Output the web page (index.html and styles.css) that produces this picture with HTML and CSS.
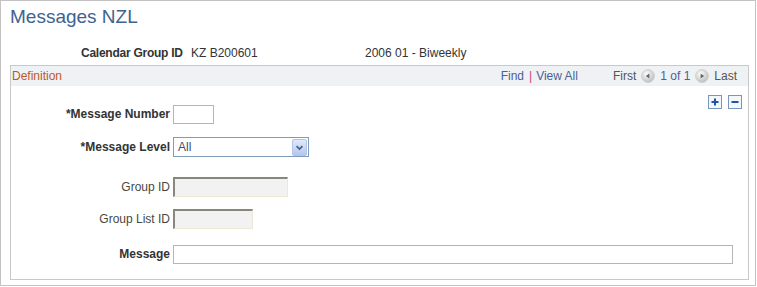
FILE: index.html
```html
<!DOCTYPE html>
<html lang="en">
<head>
    <meta charset="UTF-8">
    <title>Messages NZL</title>
    <link rel="stylesheet" href="styles.css">
</head>
<body>

    <div class="page">
        <h1 class="title">Messages NZL</h1>

        <div class="calendar-row">
            <span class="cal-label">Calendar Group ID</span>
            <span class="cal-id">KZ B200601</span>
            <span class="cal-desc">2006 01 - Biweekly</span>
        </div>

        <div class="grid-box">
            <div class="grid-header">
                <span class="grid-title">Definition</span>
                <div class="grid-nav">
                    <span class="nav-link">Find</span>
                    <span class="nav-sep">|</span>
                    <span class="nav-link">View All</span>
                    <span class="nav-text nav-first">First</span>
                    <svg class="nav-arrow" width="14" height="14" viewBox="0 0 14 14">
                        <defs>
                            <radialGradient id="circleGrad" cx="40%" cy="35%" r="70%">
                                <stop offset="0" stop-color="#ffffff"/>
                                <stop offset="1" stop-color="#b9b9b9"/>
                            </radialGradient>
                        </defs>
                        <circle cx="7" cy="7" r="6.4" fill="url(#circleGrad)" stroke="#cfcfcf"/>
                        <path d="M4.8 7 L8.4 4.6 L8.4 9.4 Z" fill="#666"/>
                    </svg>
                    <span class="nav-link">1 of 1</span>
                    <svg class="nav-arrow" width="14" height="14" viewBox="0 0 14 14">
                        <circle cx="7" cy="7" r="6.4" fill="url(#circleGrad)" stroke="#cfcfcf"/>
                        <path d="M9.2 7 L5.6 4.6 L5.6 9.4 Z" fill="#666"/>
                    </svg>
                    <span class="nav-text">Last</span>
                </div>
            </div>

            <div class="grid-body">
                <div class="row-tools">
                    <svg width="14" height="14" viewBox="0 0 14 14">
                        <rect x=".5" y=".5" width="13" height="13" fill="#f3f6fb" stroke="#7b96bd"/>
                        <path d="M7 3.5v7M3.5 7h7" stroke="#1e55a2" stroke-width="2"/>
                    </svg>
                    <svg width="14" height="14" viewBox="0 0 14 14">
                        <rect x=".5" y=".5" width="13" height="13" fill="#f3f6fb" stroke="#7b96bd"/>
                        <path d="M3.5 7h7" stroke="#1e55a2" stroke-width="2"/>
                    </svg>
                </div>

                <div class="field-row row-number">
                    <label class="field-label" for="msgNumber">*Message Number</label>
                    <input type="text" id="msgNumber" class="input input-number">
                </div>

                <div class="field-row row-level">
                    <label class="field-label">*Message Level</label>
                    <div class="select">
                        <span class="select-text">All</span>
                        <svg class="select-btn" width="15" height="17" viewBox="0 0 15 17">
                            <defs>
                                <linearGradient id="btnGrad" x1="0" y1="0" x2="0" y2="1">
                                    <stop offset="0" stop-color="#e2eafb"/>
                                    <stop offset="1" stop-color="#b4c6ef"/>
                                </linearGradient>
                            </defs>
                            <rect x=".5" y=".5" width="14" height="16" rx="1.5" fill="url(#btnGrad)" stroke="#b2c4ea"/>
                            <path d="M4.6 7.2l2.9 2.9 2.9-2.9" fill="none" stroke="#4b5f86" stroke-width="1.7"/>
                        </svg>
                    </div>
                </div>

                <div class="field-row row-group">
                    <label class="field-label label-plain" for="groupId">Group ID</label>
                    <input type="text" id="groupId" class="input input-off input-group" readonly>
                </div>

                <div class="field-row row-list">
                    <label class="field-label label-plain" for="groupListId">Group List ID</label>
                    <input type="text" id="groupListId" class="input input-off input-list" readonly>
                </div>

                <div class="field-row row-message">
                    <label class="field-label" for="message">Message</label>
                    <input type="text" id="message" class="input input-message">
                </div>
            </div>
        </div>
    </div>

</body>
</html>
```

FILE: styles.css
```css
body {
    margin: 0;
    font-family: "Liberation Sans", Arial, sans-serif;
    font-size: 12px;
    color: #333;
    background-color: white;
}

.page {
    width: 754px;
    height: 284px;
    border: 1px solid #c3c3c3;
}

.title {
    margin: 0;
    padding: 5px 0 0 9px;
    font-size: 19px;
    line-height: 22px;
    font-weight: normal;
    color: #41628f;
}

.calendar-row {
    display: flex;
    margin-top: 18px;
    padding-left: 80px;
    height: 14px;
    line-height: 14px;
}

.cal-label {
    width: 110px;
    font-weight: bold;
    letter-spacing: -0.25px;
}

.cal-id {
    width: 174px;
}

.grid-box {
    margin: 5px 0 0 9px;
    width: 737px;
    border: 1px solid #c9c9c9;
}

.grid-header {
    display: flex;
    align-items: center;
    height: 20px;
    line-height: 20px;
    padding: 0 11px 0 1px;
    background-color: #eef2f4;
}

.grid-title {
    color: #bb5a1c;
}

.grid-nav {
    display: flex;
    align-items: center;
    margin-left: auto;
}

.nav-link {
    color: #4f5f98;
}

.nav-sep {
    color: #d0407a;
    margin: 0 4px 0 5px;
}

.nav-text {
    color: #555;
}

.nav-first {
    margin-left: 35px;
}

.nav-arrow {
    margin: -1px 5px 0 5px;
}

.grid-body {
    padding: 9px 6px 15px 0;
}

.row-tools {
    display: flex;
    justify-content: flex-end;
    gap: 6px;
    height: 14px;
    margin-bottom: -4px;
}

.field-row {
    display: flex;
    align-items: center;
}

.field-label {
    width: 159px;
    margin-right: 3px;
    text-align: right;
    font-weight: bold;
    color: #333;
}

.label-plain {
    font-weight: normal;
    color: #48483f;
}

.row-number {
    height: 19px;
    line-height: 19px;
}

.row-level {
    height: 20px;
    line-height: 20px;
    margin-top: 13px;
}

.row-group {
    height: 20px;
    line-height: 20px;
    margin-top: 20px;
}

.row-list {
    height: 20px;
    line-height: 20px;
    margin-top: 12px;
}

.row-message {
    height: 19px;
    line-height: 19px;
    margin-top: 16px;
}

.input {
    box-sizing: border-box;
    margin: 0;
    padding: 0 3px;
    font-family: "Liberation Sans", Arial, sans-serif;
    font-size: 12px;
    border: 1px solid #b5b5b5;
    background-color: white;
    outline: none;
}

.input-number {
    width: 41px;
    height: 19px;
}

.input-message {
    width: 560px;
    height: 19px;
}

.input-off {
    height: 20px;
    background-color: #f2f2f2;
    border-top: 2px solid #88877c;
    border-left: 2px solid #88877c;
    border-bottom: 1px solid #ece9d8;
    border-right: 1px solid #ece9d8;
}

.input-group {
    width: 115px;
}

.input-list {
    width: 80px;
}

.select {
    box-sizing: border-box;
    display: flex;
    align-items: center;
    width: 136px;
    height: 20px;
    border: 1px solid #7f9db9;
    background-color: white;
}

.select-text {
    flex: 1;
    padding-left: 4px;
    line-height: 18px;
    color: #4a4a6a;
}

.select-btn {
    margin-right: 1px;
}
```
